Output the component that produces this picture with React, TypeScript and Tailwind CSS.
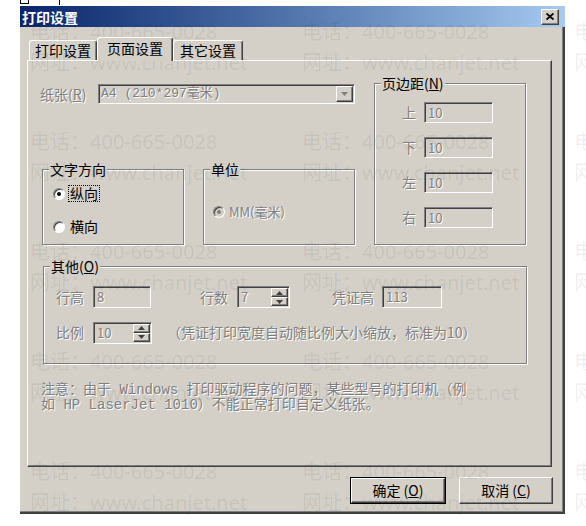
const ui = "font-['Noto_Sans_CJK_SC',sans-serif]";
const raised =
  "border border-t-white border-l-white border-r-[#404040] border-b-[#404040] shadow-[inset_-1px_-1px_0_#808080]";
const sunken =
  "border border-t-[#808080] border-l-[#808080] border-r-white border-b-white shadow-[inset_1px_1px_0_#404040]";
const etched = "border border-[#808080] shadow-[1px_1px_0_#fff,inset_1px_1px_0_#fff]";
const dis = "text-[#808080] [text-shadow:1px_1px_0_#fff]";

function GroupBox({
  label,
  className,
  children,
}: {
  label: React.ReactNode;
  className: string;
  children?: React.ReactNode;
}) {
  return (
    <div className={`relative ${etched} ${className}`}>
      <span className="absolute -top-[9px] left-[6px] bg-[#d4d0c8] px-[1px] text-[14px] leading-[16px] text-black">
        {label}
      </span>
      {children}
    </div>
  );
}

function Arrow({ up, color = "#404040" }: { up?: boolean; color?: string }) {
  return (
    <svg width="7" height="4" viewBox="0 0 7 4">
      <polygon points={up ? "3.5,0 7,4 0,4" : "0,0 7,0 3.5,4"} fill={color} />
    </svg>
  );
}

function TextBox({ value, w, h = "h-[21px]" }: { value: string; w: string; h?: string }) {
  return (
    <div className={`${sunken} ${w} ${h} flex items-center bg-[#d4d0c8] pl-[3px] text-[13px] ${dis}`}>
      {value}
    </div>
  );
}

function Spin({ value, w }: { value: string; w: string }) {
  return (
    <div className={`${sunken} ${w} flex h-[22px] bg-[#d4d0c8]`}>
      <div className={`flex flex-1 items-center pl-[3px] text-[13px] ${dis}`}>{value}</div>
      <div className="my-[1px] mr-[1px] flex w-[17px] flex-col">
        <div className={`${raised} flex flex-1 items-center justify-center bg-[#d4d0c8]`}>
          <Arrow up />
        </div>
        <div className={`${raised} flex flex-1 items-center justify-center bg-[#d4d0c8]`}>
          <Arrow />
        </div>
      </div>
    </div>
  );
}

function Radio({ checked, disabled }: { checked?: boolean; disabled?: boolean }) {
  return (
    <span
      className={`flex h-[12px] w-[12px] shrink-0 items-center justify-center rounded-full border border-t-[#808080] border-l-[#808080] border-r-white border-b-white shadow-[inset_1px_1px_0_#404040] ${
        disabled ? "bg-[#d4d0c8]" : "bg-white"
      }`}
    >
      {checked && (
        <span className={`h-[4px] w-[4px] rounded-full ${disabled ? "bg-[#808080]" : "bg-black"}`} />
      )}
    </span>
  );
}

function Watermark() {
  const cells = Array.from({ length: 15 });
  return (
    <div className="pointer-events-none absolute inset-0 grid auto-rows-[110px] grid-cols-[272px_272px_272px] pl-[30px] pt-[16px] font-['Noto_Sans','Noto_Sans_CJK_SC',sans-serif] text-[20px] leading-[31px] text-black/[0.07]">
      {cells.map((_, i) => (
        <div key={i} className="flex flex-col whitespace-nowrap">
          <span>电话：400-665-0028</span>
          <span>网址：www.chanjet.net</span>
        </div>
      ))}
    </div>
  );
}

export default function App() {
  return (
    <div className={`relative h-[526px] w-[586px] overflow-hidden bg-white ${ui}`}>
      {/* cut-off bits of the window behind */}
      <div className="flex h-[6px] items-start">
        <div className="ml-[20px] h-[4px] w-[9px] border-x border-b border-black" />
        <div className="ml-[30px] h-[5px] w-px bg-black" />
      </div>

      <div className="ml-[20px] flex w-[545px] flex-col">
        {/* title bar */}
        <div className="flex h-[21px] items-center bg-gradient-to-r from-[#0a246a] to-[#a6caf0] pl-[2px]">
          <span className="text-[14px] font-bold leading-none text-white">打印设置</span>
          <div className={`${raised} ml-auto mr-[6px] flex h-[16px] w-[18px] items-center justify-center bg-[#d4d0c8]`}>
            <svg width="8" height="7" viewBox="0 0 8 7">
              <path d="M0.5 0.5 L7.5 6.5 M7.5 0.5 L0.5 6.5" stroke="#000" strokeWidth="1.8" />
            </svg>
          </div>
        </div>

        {/* body */}
        <div className="flex h-[487px] flex-col border-b-2 border-r-2 border-b-[#404040] border-r-[#404040] bg-[#d4d0c8] text-[14px] shadow-[inset_-1px_-1px_0_#808080]">
          {/* tabs */}
          <div className="flex h-[33px] items-end pl-[9px] pt-[10px]">
            <div className="flex h-[20px] w-[68px] items-center justify-center rounded-t-[3px] border-l border-t border-r-[#404040] border-l-white border-t-white border-r shadow-[inset_-1px_0_0_#808080]">
              打印设置
            </div>
            <div className="relative z-10 -mb-px flex h-[24px] w-[76px] items-center justify-center rounded-t-[3px] border-l border-t border-r border-l-white border-t-white border-r-[#404040] bg-[#d4d0c8] pb-[2px] shadow-[inset_-1px_0_0_#808080]">
              页面设置
            </div>
            <div className="flex h-[20px] w-[70px] items-center justify-center rounded-t-[3px] border-l border-t border-r border-l-white border-t-white border-r-[#404040] shadow-[inset_-1px_0_0_#808080]">
              其它设置
            </div>
          </div>

          {/* panel */}
          <div className={`${raised} ml-[7px] h-[407px] w-[525px] pl-[12px] pt-[22px]`}>
            <div className="flex h-[162px]">
              <div className="flex w-[316px] flex-col">
                <div className="mt-[1px] flex h-[20px] items-center">
                  <span className={`w-[58px] ${dis}`}>
                    纸张(<span className="underline">R</span>)
                  </span>
                  <div className={`${sunken} flex h-[20px] w-[257px] items-center bg-[#d4d0c8]`}>
                    <span className={`flex-1 pl-[2px] font-['Liberation_Mono','Noto_Sans_CJK_SC',monospace] text-[13px] ${dis}`}>
                      A4 (210*297毫米)
                    </span>
                    <div className={`${raised} mr-[1px] flex h-[16px] w-[17px] items-center justify-center bg-[#d4d0c8]`}>
                      <Arrow color="#808080" />
                    </div>
                  </div>
                </div>

                <div className="ml-[2px] mt-[65px] flex">
                  <GroupBox label="文字方向" className="h-[76px] w-[142px]">
                    <div className="flex flex-col gap-[16px] pl-[10px] pt-[15px]">
                      <div className="flex h-[17px] items-center">
                        <Radio checked />
                        <span className="ml-[3px] border border-dotted border-black px-[1px] leading-[15px]">纵向</span>
                      </div>
                      <div className="flex h-[17px] items-center">
                        <Radio />
                        <span className="ml-[5px]">横向</span>
                      </div>
                    </div>
                  </GroupBox>
                  <GroupBox label="单位" className="ml-[19px] h-[76px] w-[152px]">
                    <div className="flex h-[17px] items-center pl-[9px] mt-[33px]">
                      <Radio checked disabled />
                      <span className={`ml-[4px] text-[13px] ${dis}`}>MM(毫米)</span>
                    </div>
                  </GroupBox>
                </div>
              </div>

              <GroupBox
                label={
                  <>
                    页边距(<span className="underline">N</span>)
                  </>
                }
                className="ml-[18px] h-[162px] w-[152px]"
              >
                <div className="flex flex-col gap-[14px] pl-[27px] pt-[18px]">
                  {["上", "下", "左", "右"].map((s) => (
                    <div key={s} className="flex h-[21px] items-center">
                      <span className={`w-[22px] ${dis}`}>{s}</span>
                      <TextBox value="10" w="w-[69px]" />
                    </div>
                  ))}
                </div>
              </GroupBox>
            </div>

            <GroupBox
              label={
                <>
                  其他(<span className="underline">O</span>)
                </>
              }
              className="ml-[3px] mt-[21px] h-[98px] w-[484px]"
            >
              <div className="flex flex-col gap-[14px] pl-[12px] pt-[19px]">
                <div className="flex h-[22px] items-center">
                  <span className={`w-[37px] ${dis}`}>行高</span>
                  <TextBox value="8" w="w-[58px]" h="h-[22px]" />
                  <span className={`ml-[49px] w-[37px] ${dis}`}>行数</span>
                  <Spin value="7" w="w-[53px]" />
                  <span className={`ml-[42px] w-[50px] ${dis}`}>凭证高</span>
                  <TextBox value="113" w="w-[60px]" h="h-[22px]" />
                </div>
                <div className="flex h-[21px] items-center">
                  <span className={`w-[37px] ${dis}`}>比例</span>
                  <Spin value="10" w="w-[59px]" />
                  <span className={`ml-[15px] ${dis}`}>（凭证打印宽度自动随比例大小缩放，标准为10）</span>
                </div>
              </div>
            </GroupBox>

            <p className={`ml-[1px] mt-[19px] font-['Liberation_Mono','Noto_Sans_CJK_SC',monospace] text-[14px] leading-[15px] ${dis}`}>
              注意：由于 Windows 打印驱动程序的问题，某些型号的打印机（例
              <br />
              如 HP LaserJet 1010）不能正常打印自定义纸张。
            </p>
          </div>

          {/* buttons */}
          <div className="mt-[10px] flex justify-end gap-[13px] pr-[10px]">
            <div className="h-[27px] w-[96px] border border-black">
              <div className={`${raised} flex h-full items-center justify-center`}>
                确定<span className="ml-[3px]">(<span className="underline">O</span>)</span>
              </div>
            </div>
            <div className={`${raised} flex h-[27px] w-[94px] items-center justify-center`}>
              取消<span className="ml-[3px]">(<span className="underline">C</span>)</span>
            </div>
          </div>
        </div>
      </div>

      <Watermark />
    </div>
  );
}
